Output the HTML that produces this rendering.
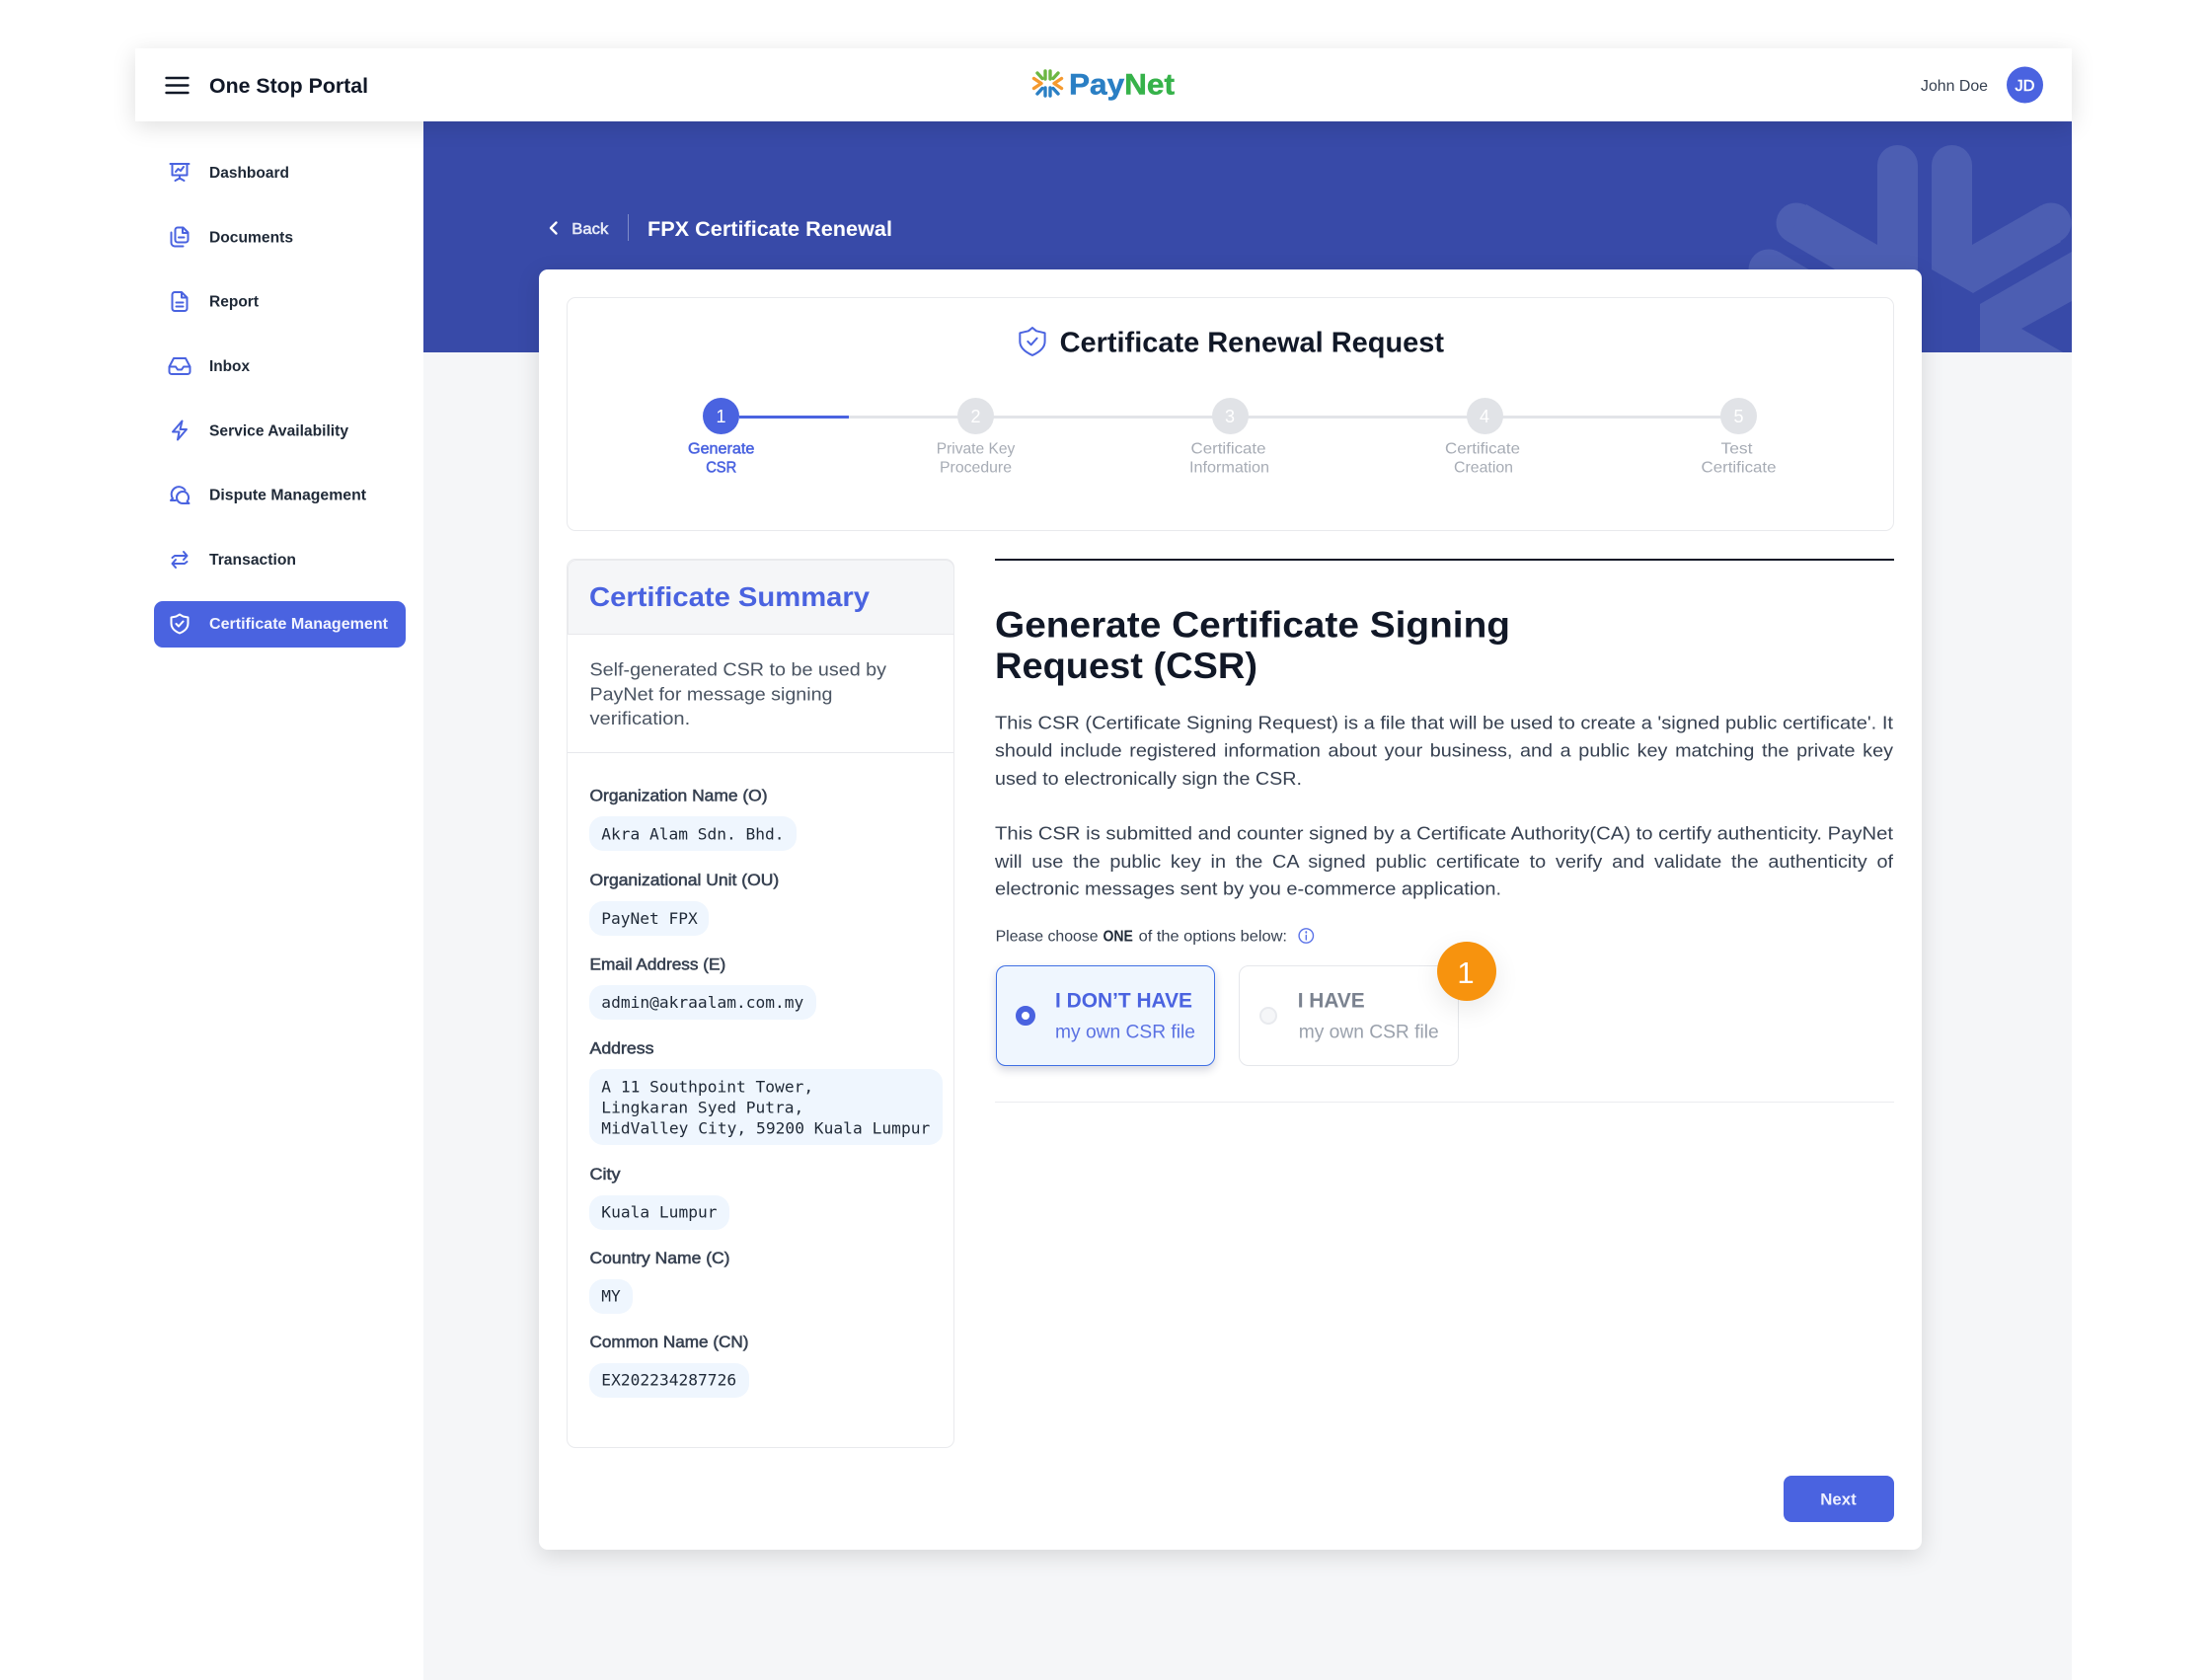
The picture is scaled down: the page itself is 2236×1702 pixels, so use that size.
<!DOCTYPE html>
<html lang="en">
<head>
<meta charset="utf-8">
<title>FPX Certificate Renewal</title>
<style>
html,body{margin:0;padding:0;background:#fff}
body{position:relative;width:2236px;height:1702px;overflow:hidden;font-family:"Liberation Sans",sans-serif}
div{position:absolute;box-sizing:border-box}
#top{position:absolute;left:0;top:0;width:2236px;height:1702px}
#top text{fill:currentColor;font-family:"Liberation Sans",sans-serif;white-space:pre}
.b{font-weight:700}
.m{stroke:currentColor;stroke-width:.55px}
#top text.mono{font-family:"DejaVu Sans Mono",monospace;font-size:16.2px;color:#1f2937}
.lab{font-size:16.7px;color:#374151}
.nav{font-size:15.9px;font-weight:700;color:#1f2937}
.para{font-size:18.7px;color:#374151}
.st{font-size:15.7px;color:#a7acb5}
.i{fill:none;stroke:#4a63e0;stroke-width:2;stroke-linecap:round;stroke-linejoin:round}
.chip{background:#eff6fe;border-radius:14px}
</style>
</head>
<body>
<div style="left:137px;top:49px;width:1962px;height:1653px;background:#fff"></div>
<div style="left:429px;top:123px;width:1670px;height:1579px;background:#f5f6f8"></div>

<div style="left:429px;top:123px;width:1670px;height:234px;background:#384aa8;overflow:hidden">
<svg width="1670" height="234" viewBox="429 123 1670 234" style="position:absolute;left:0;top:0">
<g fill="#4c5eb2">
<circle cx="1922.5" cy="167.5" r="20.5"/>
<circle cx="1977.5" cy="167.5" r="20.5"/>
<circle cx="1820" cy="226" r="20.5"/>
<circle cx="2078" cy="226" r="20.5"/>
<circle cx="1792" cy="273" r="20.5"/>
<path d="M1902 167V248L1830 207L1810 244L1900 297H1943V167Z"/>
<path d="M1957 167V273L1999 297L2088 245L2068 208L1998 248V167Z"/>
<path d="M1802 255L1782 291L1850 330L1870 295Z"/>
<path d="M2006 308L2099 255V305L2048 333L2099 362H2006Z"/>
</g>
</svg>
</div>

<div style="left:137px;top:49px;width:1962px;height:74px;background:#fff;box-shadow:0 5px 22px rgba(0,0,0,.13)"></div>
<div style="left:156px;top:609px;width:255px;height:47px;background:#4a63e0;border-radius:9px"></div>
<div style="left:636px;top:217px;width:1px;height:27px;background:#7f8cc9"></div>

<div style="left:546px;top:272.5px;width:1401px;height:1297px;background:#fff;border-radius:9px;box-shadow:0 6px 24px rgba(0,0,0,.13)"></div>
<div style="left:574px;top:301px;width:1345px;height:237px;border:1.5px solid #e9eaed;border-radius:9px"></div>

<div style="left:749px;top:420.5px;width:111px;height:3px;background:#4a63e0"></div>
<div style="left:860px;top:420.5px;width:902px;height:3px;background:#e2e4e8"></div>
<div style="left:712px;top:403px;width:37px;height:37px;border-radius:50%;background:#4a63e0"></div>
<div style="left:970px;top:403px;width:37px;height:37px;border-radius:50%;background:#e1e3e7"></div>
<div style="left:1227.500px;top:403px;width:37px;height:37px;border-radius:50%;background:#e1e3e7"></div>
<div style="left:1485.500px;top:403px;width:37px;height:37px;border-radius:50%;background:#e1e3e7"></div>
<div style="left:1743px;top:403px;width:37px;height:37px;border-radius:50%;background:#e1e3e7"></div>

<div style="left:574px;top:566px;width:393px;height:901px;border:1.5px solid #e9eaed;border-radius:9px"></div>
<div style="left:574.5px;top:566.5px;width:392px;height:76.5px;background:#f5f6f8;border:1.5px solid #e9eaed;border-bottom-color:#e7e8ec;border-radius:9px 9px 0 0"></div>
<div style="left:575px;top:761.500px;width:391px;height:1.5px;background:#e7e8ec"></div>

<div class="chip" style="left:597px;top:827px;width:210px;height:35px"></div>
<div class="chip" style="left:597px;top:912.500px;width:121px;height:35px"></div>
<div class="chip" style="left:597px;top:997.500px;width:230px;height:35px"></div>
<div class="chip" style="left:597px;top:1083px;width:358px;height:77px"></div>
<div class="chip" style="left:597px;top:1210.500px;width:142px;height:35px"></div>
<div class="chip" style="left:597px;top:1295.500px;width:44px;height:35px"></div>
<div class="chip" style="left:597px;top:1380.500px;width:162px;height:35px"></div>

<div style="left:1008px;top:566px;width:910.500px;height:2px;background:#111827"></div>
<div style="left:1008.500px;top:978px;width:222.500px;height:101.500px;background:#eff6fe;border:1.5px solid #3f6fe4;border-radius:10px;box-shadow:0 4px 9px rgba(40,50,90,.2)"></div>
<div style="left:1254.500px;top:978px;width:223px;height:101.500px;background:#fff;border:1.5px solid #e5e7eb;border-radius:10px"></div>
<div style="left:1028.500px;top:1018.500px;width:20px;height:20px;border-radius:50%;border:6px solid #4a63e0;background:#fff"></div>
<div style="left:1275.500px;top:1019.500px;width:18px;height:18px;border-radius:50%;border:2px solid #e8eaee;background:#f5f6f8"></div>
<div style="left:1456px;top:954px;width:60px;height:60px;border-radius:50%;background:#f7930e;box-shadow:0 8px 26px rgba(0,0,0,.09)"></div>
<div style="left:1008px;top:1115.500px;width:910.500px;height:1.5px;background:#ebecef"></div>
<div style="left:1807px;top:1495px;width:112px;height:47px;background:#4a63e0;border-radius:8px"></div>

<svg id="top" viewBox="0 0 2236 1702" xmlns="http://www.w3.org/2000/svg">
<!-- header -->
<g stroke="#111827" stroke-width="2.4" stroke-linecap="round"><path d="M168.500 79H190.500M168.500 86.500H190.500M168.500 94H190.500"/></g>
<text x="212" y="94" class="b" font-size="21.500" textLength="161" lengthAdjust="spacingAndGlyphs" style="color:#111827">One Stop Portal</text>

<g fill="none" stroke-width="3.400" stroke-linecap="round" stroke-linejoin="round">
<g stroke="#6cb743"><path d="M1059 72V80M1064 72V80M1051 74L1056 79.500M1072 74L1067 79.500"/></g>
<g stroke="#f59a2f"><path d="M1047.500 79.500L1055 84.500L1047.500 89.500M1075.500 79.500L1068 84.500L1075.500 89.500"/></g>
<g stroke="#2a7fc4"><path d="M1059 89V97M1064 89V97M1051 95L1056 89.500M1072 95L1067 89.500"/></g>
</g>
<text x="1083" y="95.700" class="b" font-size="30" stroke-width=".5" textLength="107" lengthAdjust="spacingAndGlyphs"><tspan fill="#2a7fc4" stroke="#2a7fc4">Pay</tspan><tspan fill="#36b24a" stroke="#36b24a">Net</tspan></text>

<text x="1946" y="91.800" font-size="16" textLength="68" lengthAdjust="spacingAndGlyphs" style="color:#374151">John Doe</text>
<circle cx="2051.500" cy="86" r="18.500" fill="#4a63e0"/>
<text x="2051.500" y="92" class="m" text-anchor="middle" font-size="16" textLength="20" lengthAdjust="spacingAndGlyphs" style="color:#fff">JD</text>

<!-- sidebar -->
<text x="212" y="180" class="nav" textLength="81" lengthAdjust="spacingAndGlyphs">Dashboard</text>
<text x="212" y="245.400" class="nav" textLength="85" lengthAdjust="spacingAndGlyphs">Documents</text>
<text x="212" y="310.700" class="nav" textLength="50" lengthAdjust="spacingAndGlyphs">Report</text>
<text x="212" y="376" class="nav" textLength="41" lengthAdjust="spacingAndGlyphs">Inbox</text>
<text x="212" y="441.300" class="nav" textLength="141" lengthAdjust="spacingAndGlyphs">Service Availability</text>
<text x="212" y="506.600" class="nav" textLength="159" lengthAdjust="spacingAndGlyphs">Dispute Management</text>
<text x="212" y="571.900" class="nav" textLength="88" lengthAdjust="spacingAndGlyphs">Transaction</text>
<text x="212" y="637.200" class="nav" textLength="181" lengthAdjust="spacingAndGlyphs" style="color:#f2f4ff">Certificate Management</text>

<g class="i">
<g transform="translate(170,162.500)"><path d="M2.500 3.500H21.500M4.500 3.500V15H19.500V3.500M12 15V18M7.500 20.500L12 18L16.500 20.500M8 11.500L10.500 8.500L13 10.500L16 6.500"/></g>
<g transform="translate(170,228)"><path d="M10 2.500H15.500L20.500 7.500V15A2.500 2.500 0 0 1 18 17.500H10A2.500 2.500 0 0 1 7.500 15V5A2.500 2.500 0 0 1 10 2.500ZM15 2.500V8H20.500M3.500 7.500V18A3.500 3.500 0 0 0 7 21.500H15.500M11 12.500H16.500"/></g>
<g transform="translate(170,293.500)"><path d="M7 2.500H14L19.500 8V19A2.500 2.500 0 0 1 17 21.500H7A2.500 2.500 0 0 1 4.500 19V5A2.500 2.500 0 0 1 7 2.500ZM14 2.500V8H19.500M8.500 13H15.500M8.500 17H15.500"/></g>
<g transform="translate(170,359)"><path d="M6 4H18L22.500 12.500V17.500A2.500 2.500 0 0 1 20 20H4A2.500 2.500 0 0 1 1.500 17.500V12.500ZM1.500 12.500H8L10 15.500H14L16 12.500H22.500"/></g>
<g transform="translate(170,424)"><path d="M14.500 2.500L5 13.500H11.500L10 21.500L19 11H12.500Z"/></g>
<g transform="translate(170,489.500)"><path d="M8 17.500H3L5 15.500A7.500 7.500 0 1 1 17.500 7M15 8.500A6 6 0 1 0 15 20.500H21.500L19.500 18.500A6 6 0 0 0 15 8.500Z"/></g>
<g transform="translate(170,555)"><path d="M4.500 10L7 8H19.500M16 4L19.500 8L16 12M19.500 14L17 16H4.500M8 12L4.500 16L8 20"/></g>
<g transform="translate(170,620)" style="stroke:#fff"><path d="M12 2.500L15.500 4.500L20.500 5.500V11.500C20.500 16 17 19.500 12 21.500C7 19.500 3.500 16 3.500 11.500V5.500L8.500 4.500ZM8.500 12L11 14.500L15.500 9.500"/></g>
</g>

<!-- hero -->
<path d="M563.500 225.500L558 231L563.500 236.500" fill="none" stroke="#fff" stroke-width="2.400" stroke-linecap="round" stroke-linejoin="round"/>
<text x="579.300" y="236.800" class="m" font-size="16" stroke-width=".3" textLength="37" lengthAdjust="spacingAndGlyphs" style="color:#e8ebf8">Back</text>
<text x="656" y="238.800" class="b" font-size="21.500" textLength="248" lengthAdjust="spacingAndGlyphs" style="color:#fff">FPX Certificate Renewal</text>

<!-- title + stepper -->
<g transform="translate(1030,330) scale(1.330)" fill="none" stroke="#4a63e0" stroke-width="1.500" stroke-linejoin="round" stroke-linecap="round"><path d="M12 1.500L15 4L21.500 5.500V12C21.500 16.500 17.500 20 12 22.500C6.500 20 2.500 16.500 2.500 12V5.500L9 4Z"/><path d="M8.500 12L11 14.500L15.500 9.500"/></g>
<text x="1073.600" y="356.500" class="b" font-size="28.500" textLength="389.400" lengthAdjust="spacingAndGlyphs" style="color:#111827">Certificate Renewal Request</text>

<g font-size="18" text-anchor="middle" style="color:#fff">
<text x="730.500" y="428">1</text><text x="988.500" y="428">2</text><text x="1246" y="428">3</text><text x="1504" y="428">4</text><text x="1761.500" y="428">5</text>
</g>
<g text-anchor="middle">
<text x="730.700" y="459.500" class="st m" textLength="67.400" lengthAdjust="spacingAndGlyphs" style="color:#4a63e0">Generate</text>
<text x="730.700" y="478.500" class="st m" textLength="31" lengthAdjust="spacingAndGlyphs" style="color:#4a63e0">CSR</text>
<text x="988.500" y="459.500" class="st" textLength="79.500" lengthAdjust="spacingAndGlyphs">Private Key</text>
<text x="988.500" y="478.500" class="st" textLength="73" lengthAdjust="spacingAndGlyphs">Procedure</text>
<text x="1244.500" y="459.500" class="st" textLength="76" lengthAdjust="spacingAndGlyphs">Certificate</text>
<text x="1245.500" y="478.500" class="st" textLength="81" lengthAdjust="spacingAndGlyphs">Information</text>
<text x="1502" y="459.500" class="st" textLength="76" lengthAdjust="spacingAndGlyphs">Certificate</text>
<text x="1503" y="478.500" class="st" textLength="60" lengthAdjust="spacingAndGlyphs">Creation</text>
<text x="1759.500" y="459.500" class="st" textLength="32" lengthAdjust="spacingAndGlyphs">Test</text>
<text x="1761.500" y="478.500" class="st" textLength="76" lengthAdjust="spacingAndGlyphs">Certificate</text>
</g>

<!-- summary -->
<text x="597" y="614" class="b" font-size="27.500" textLength="284" lengthAdjust="spacingAndGlyphs" style="color:#4a63e0">Certificate Summary</text>
<g font-size="18.700" style="color:#4b5563">
<text x="597.500" y="684.500" textLength="300.500" lengthAdjust="spacingAndGlyphs">Self-generated CSR to be used by</text>
<text x="597.500" y="709.300" textLength="246" lengthAdjust="spacingAndGlyphs">PayNet for message signing</text>
<text x="597.500" y="733.800" textLength="101.700" lengthAdjust="spacingAndGlyphs">verification.</text>
</g>
<text x="597.500" y="811.700" class="lab m" textLength="180" lengthAdjust="spacingAndGlyphs">Organization Name (O)</text>
<text x="597.500" y="897.200" class="lab m" textLength="191.700" lengthAdjust="spacingAndGlyphs">Organizational Unit (OU)</text>
<text x="597.500" y="982.300" class="lab m" textLength="137.700" lengthAdjust="spacingAndGlyphs">Email Address (E)</text>
<text x="597.500" y="1067.700" class="lab m" textLength="65" lengthAdjust="spacingAndGlyphs">Address</text>
<text x="597.500" y="1195" class="lab m" textLength="31" lengthAdjust="spacingAndGlyphs">City</text>
<text x="597.500" y="1280" class="lab m" textLength="142" lengthAdjust="spacingAndGlyphs">Country Name (C)</text>
<text x="597.500" y="1365" class="lab m" textLength="161" lengthAdjust="spacingAndGlyphs">Common Name (CN)</text>

<text x="609.300" y="850.700" class="mono" textLength="185.200">Akra Alam Sdn. Bhd.</text>
<text x="609.300" y="936" class="mono" textLength="97.500">PayNet FPX</text>
<text x="609.300" y="1021" class="mono" textLength="205">admin@akraalam.com.my</text>
<text x="609.300" y="1106.700" class="mono" textLength="214.800">A 11 Southpoint Tower,</text>
<text x="609.300" y="1127.700" class="mono" textLength="205">Lingkaran Syed Putra,</text>
<text x="609.300" y="1148.500" class="mono" textLength="333">MidValley City, 59200 Kuala Lumpur</text>
<text x="609.300" y="1233.300" class="mono" textLength="117.200">Kuala Lumpur</text>
<text x="609.300" y="1318.300" class="mono" textLength="19.500">MY</text>
<text x="609.300" y="1403.500" class="mono" textLength="136.800">EX202234287726</text>

<!-- right -->
<text x="1008" y="645.500" class="b" font-size="37" textLength="522" lengthAdjust="spacingAndGlyphs" style="color:#111827">Generate Certificate Signing</text>
<text x="1008" y="687" class="b" font-size="37" textLength="266" lengthAdjust="spacingAndGlyphs" style="color:#111827">Request (CSR)</text>

<text x="1008" y="738.300" class="para" textLength="910" lengthAdjust="spacingAndGlyphs">This CSR (Certificate Signing Request) is a file that will be used to create a 'signed public certificate'. It</text>
<text x="1008" y="766.700" class="para" textLength="910" lengthAdjust="spacingAndGlyphs" style="word-spacing:2px">should include registered information about your business, and a public key matching the private key</text>
<text x="1008" y="795" class="para" textLength="311" lengthAdjust="spacingAndGlyphs">used to electronically sign the CSR.</text>
<text x="1008" y="850.700" class="para" textLength="910" lengthAdjust="spacingAndGlyphs">This CSR is submitted and counter signed by a Certificate Authority(CA) to certify authenticity. PayNet</text>
<text x="1008" y="879" class="para" textLength="910" lengthAdjust="spacingAndGlyphs" style="word-spacing:4px">will use the public key in the CA signed public certificate to verify and validate the authenticity of</text>
<text x="1008" y="906.500" class="para" textLength="513" lengthAdjust="spacingAndGlyphs">electronic messages sent by you e-commerce application.</text>

<g font-size="15.800" style="color:#374151">
<text x="1008.600" y="953.300" textLength="104" lengthAdjust="spacingAndGlyphs">Please choose</text>
<text x="1117.500" y="953.300" class="b" textLength="30.400" lengthAdjust="spacingAndGlyphs" style="color:#1f2937">ONE</text>
<text x="1153.600" y="953.300" textLength="150.400" lengthAdjust="spacingAndGlyphs">of the options below:</text>
</g>
<g fill="none" stroke="#5b73e8" stroke-width="1.400"><circle cx="1323.300" cy="948" r="7.200"/><path d="M1323.300 947.500V952" stroke-linecap="round"/><path d="M1323.300 944V944.800" stroke-linecap="round" stroke-width="1.800"/></g>

<text x="1069" y="1020.500" class="b" font-size="21" textLength="139" lengthAdjust="spacingAndGlyphs" style="color:#4a63e0">I DON’T HAVE</text>
<text x="1069" y="1051.700" font-size="19.300" textLength="142" lengthAdjust="spacingAndGlyphs" style="color:#5b72e3">my own CSR file</text>
<text x="1314.700" y="1020.500" class="b" font-size="21" textLength="68" lengthAdjust="spacingAndGlyphs" style="color:#7a828f">I HAVE</text>
<text x="1315.700" y="1051.700" font-size="19.300" textLength="142" lengthAdjust="spacingAndGlyphs" style="color:#9aa1ac">my own CSR file</text>
<text x="1485" y="996" text-anchor="middle" font-size="31" style="color:#fff">1</text>

<text x="1844.300" y="1524.300" class="b" font-size="16.500" textLength="36.400" lengthAdjust="spacingAndGlyphs" style="color:#eef0ff">Next</text>
</svg>
</body>
</html>
